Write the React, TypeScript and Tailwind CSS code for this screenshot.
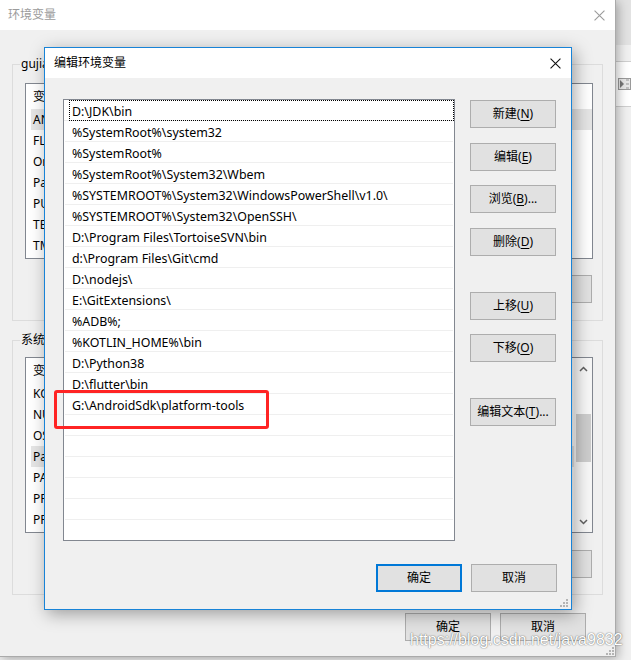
import React from "react";

function XIcon({ color, size = 10 }: { color: string; size?: number }) {
  return (
    <svg width={size} height={size} viewBox="0 0 10 10" className="block">
      <path d="M0.5 0.5 L9.5 9.5 M9.5 0.5 L0.5 9.5" stroke={color} strokeWidth="1" fill="none" />
    </svg>
  );
}

function Grip() {
  return (
    <svg width="9" height="9" viewBox="0 0 9 9" className="block">
      <rect x="7" y="1" width="2" height="2" fill="#b4b4b4" />
      <rect x="4" y="4" width="2" height="2" fill="#b4b4b4" />
      <rect x="7" y="4" width="2" height="2" fill="#b4b4b4" />
      <rect x="1" y="7" width="2" height="2" fill="#b4b4b4" />
      <rect x="4" y="7" width="2" height="2" fill="#b4b4b4" />
      <rect x="7" y="7" width="2" height="2" fill="#b4b4b4" />
    </svg>
  );
}

function Btn({
  cn,
  k,
  suffix = "",
  focus = false,
  w = "w-[86px]",
}: {
  cn: string;
  k?: string;
  suffix?: string;
  focus?: boolean;
  w?: string;
}) {
  return (
    <div
      className={
        "h-[28px] flex items-center justify-center bg-[#e1e1e1] text-[12px] text-black shrink-0 " +
        w +
        (focus ? " border-2 border-[#0078d7]" : " border border-[#adadad]")
      }
    >
      <span>
        {cn}
        {k ? (
          <>
            (<span className="underline underline-offset-[2px]">{k}</span>)
          </>
        ) : null}
        {suffix}
      </span>
    </div>
  );
}

const paths = [
  "D:\\JDK\\bin",
  "%SystemRoot%\\system32",
  "%SystemRoot%",
  "%SystemRoot%\\System32\\Wbem",
  "%SYSTEMROOT%\\System32\\WindowsPowerShell\\v1.0\\",
  "%SYSTEMROOT%\\System32\\OpenSSH\\",
  "D:\\Program Files\\TortoiseSVN\\bin",
  "d:\\Program Files\\Git\\cmd",
  "D:\\nodejs\\",
  "E:\\GitExtensions\\",
  "%ADB%;",
  "%KOTLIN_HOME%\\bin",
  "D:\\Python38",
  "D:\\flutter\\bin",
  "G:\\AndroidSdk\\platform-tools",
  "",
  "",
  "",
  "",
  "",
  "",
];

function BgList({
  rows,
  selected,
  scrollbar = false,
}: {
  rows: string[];
  selected: number;
  scrollbar?: boolean;
}) {
  return (
    <div className="relative h-[176px] w-full border border-[#828790] bg-white flex overflow-hidden">
      <div className="flex-1 flex flex-col">
        <div className="h-[25px] flex items-center pl-[7px] text-[12px] text-black">
          <span className="w-[150px]">变量</span>
          <span>值</span>
        </div>
        {rows.map((r, i) => (
          <div
            key={i}
            className={
              "h-[21px] flex items-center ml-[5px] pl-[2px] text-[12px] text-black whitespace-nowrap " +
              (i === selected ? "bg-[#e5e5e5]" : "")
            }
          >
            {r}
          </div>
        ))}
      </div>
      {scrollbar ? (
        <div className="w-[18px] h-full bg-[#f7f7f7] flex flex-col items-center pt-[8px]">
          <svg width="9" height="6" viewBox="0 0 9 6" className="block">
            <path d="M1 5 L4.5 1.5 L8 5" stroke="#606060" strokeWidth="1.5" fill="none" />
          </svg>
          <div className="mt-[42px] w-[15px] h-[48px] bg-[#cdcdcd]" />
          <div className="flex-1" />
          <svg width="9" height="6" viewBox="0 0 9 6" className="block mb-[7px]">
            <path d="M1 1 L4.5 4.5 L8 1" stroke="#606060" strokeWidth="1.5" fill="none" />
          </svg>
        </div>
      ) : null}
    </div>
  );
}

export default function App() {
  return (
    <div className="relative w-[631px] h-[660px] overflow-hidden bg-[#f0f0f0] font-['Noto_Sans','Noto_Sans_CJK_SC',sans-serif]">
      {/* window peeking at right */}
      <div className="absolute right-0 top-0 w-[15px] h-[660px] flex flex-col">
        <div className="h-[45px] bg-[#e2e2e2]" />
        <div className="h-[17px] bg-[#f0f0f0] border-b border-[#cfcfcf]" />
        <div className="h-[45px] bg-white border-b border-[#cfcfcf] flex items-center pl-[2px]">
          <div className="w-[13px] h-[12px] border border-[#9a9a9a] bg-[#e8e8e8] flex items-center">
            <svg width="11" height="10" viewBox="0 0 11 10" className="block">
              <path d="M1 1 L5 5 L1 9 Z" fill="#777" />
              <path d="M7 1 H10 M7 5 H10 M7 9 H10" stroke="#999" strokeWidth="1" />
            </svg>
          </div>
        </div>
        <div className="flex-1 bg-[#f0f0f0]" />
      </div>

      {/* background window: 环境变量 */}
      <div className="absolute left-0 top-0 w-[616px] h-[657px] flex flex-col bg-[#f0f0f0] border-r border-b border-[#aaaaaa] shadow-[2px_2px_10px_rgba(0,0,0,0.3)]">
        <div className="h-[30px] shrink-0 bg-white flex items-center justify-between pl-[8px] pr-[10px]">
          <span className="text-[12px] text-[#9b9b9b]">环境变量</span>
          <XIcon color="#9b9b9b" size={11} />
        </div>
        <div className="flex flex-col pl-[12px] pr-[12px] pt-[34px]">
          {/* group 1 */}
          <div className="relative w-[591px] h-[257px] border border-[#dcdcdc] flex flex-col pl-[12px] pr-[9px] pt-[18px]">
            <span className="absolute left-[7px] -top-[9px] bg-[#f0f0f0] px-[1px] text-[12px] leading-[16px] text-black">
              gujia 的用户变量(U)
            </span>
            <BgList
              rows={["ANDROID_HOME", "FLUTTER_STORAGE_BASE_URL", "OneDrive", "Path", "PUB_HOSTED_URL", "TEMP", "TMP"]}
              selected={0}
            />
            <div className="mt-[16px] flex justify-end gap-[9px] pr-[1px]">
              <Btn cn="新建" k="N" suffix="..." />
              <Btn cn="编辑" k="E" suffix="..." />
              <Btn cn="删除" k="D" />
            </div>
          </div>
          {/* group 2 */}
          <div className="relative mt-[19px] w-[591px] h-[255px] border border-[#dcdcdc] flex flex-col pl-[12px] pr-[9px] pt-[16px]">
            <span className="absolute left-[7px] -top-[9px] bg-[#f0f0f0] px-[1px] text-[12px] leading-[16px] text-black">
              系统变量(S)
            </span>
            <BgList
              rows={["KOTLIN_HOME", "NUMBER_OF_PROCESSORS", "OS", "Path", "PATHEXT", "PROCESSOR_ARCHITECTURE", "PROCESSOR_IDENTIFIER"]}
              selected={3}
              scrollbar
            />
            <div className="mt-[17px] flex justify-end gap-[9px] pr-[1px]">
              <Btn cn="新建" k="W" suffix="..." />
              <Btn cn="编辑" k="I" suffix="..." />
              <Btn cn="删除" k="L" />
            </div>
          </div>
          <div className="mt-[18px] flex justify-end gap-[9px] pr-[17px]">
            <Btn cn="确定" />
            <Btn cn="取消" />
          </div>
        </div>
        <div className="absolute right-[1px] bottom-[1px]">
          <Grip />
        </div>
      </div>

      {/* foreground dialog: 编辑环境变量 */}
      <div className="absolute left-[44px] top-[47px] w-[528px] h-[563px] flex flex-col border border-[#1883d7] bg-[#f0f0f0] shadow-[3px_4px_16px_rgba(0,0,0,0.35)]">
        <div className="h-[30px] shrink-0 bg-white flex items-center justify-between pl-[9px] pr-[10px]">
          <span className="text-[12px] text-black">编辑环境变量</span>
          <XIcon color="#111" size={11} />
        </div>
        <div className="flex pl-[18px] pr-[14px] pt-[21px]">
          <div className="w-[392px] h-[442px] border border-[#828790] bg-white overflow-hidden flex flex-col">
            {paths.map((p, i) =>
              i === 0 ? (
                <div key={i} className="h-[21px] shrink-0 pl-[5px] pr-[0px] border-b border-[#efefef]">
                  <div className="h-[21px] border border-dotted border-black pl-[2px] pt-[2px] text-[12.4px] leading-[18px] text-black whitespace-nowrap">
                    {p}
                  </div>
                </div>
              ) : (
                <div
                  key={i}
                  className="h-[21px] shrink-0 mx-[1px] pl-[7px] pt-[3px] border-b border-[#efefef] text-[12.4px] leading-[17px] text-black whitespace-nowrap"
                >
                  {p}
                </div>
              )
            )}
          </div>
          <div className="ml-[15px] pt-[1px] flex flex-col">
            <Btn cn="新建" k="N" />
            <div className="mt-[15px]">
              <Btn cn="编辑" k="E" />
            </div>
            <div className="mt-[14px]">
              <Btn cn="浏览" k="B" suffix="..." />
            </div>
            <div className="mt-[15px]">
              <Btn cn="删除" k="D" />
            </div>
            <div className="mt-[36px]">
              <Btn cn="上移" k="U" />
            </div>
            <div className="mt-[14px]">
              <Btn cn="下移" k="O" />
            </div>
            <div className="mt-[36px]">
              <Btn cn="编辑文本" k="T" suffix="..." />
            </div>
          </div>
        </div>
        <div className="mt-[23px] flex justify-end gap-[9px] pr-[14px]">
          <Btn cn="确定" focus />
          <Btn cn="取消" />
        </div>
        <div className="absolute right-[3px] bottom-[2px]">
          <Grip />
        </div>
      </div>

      {/* red annotation box */}
      <div className="absolute left-[54px] top-[390px] w-[215px] h-[39px] border-[3px] border-[#ff2424] rounded-[3px]" />

      {/* watermark */}
      <div className="absolute left-[410px] top-[630px] text-[16px] leading-[20px] text-white font-['Liberation_Sans',sans-serif] [text-shadow:0_0_1px_rgba(0,0,0,0.55),0_0_2px_rgba(0,0,0,0.3)]">
        https://blog.csdn.net/java9832
      </div>
    </div>
  );
}
